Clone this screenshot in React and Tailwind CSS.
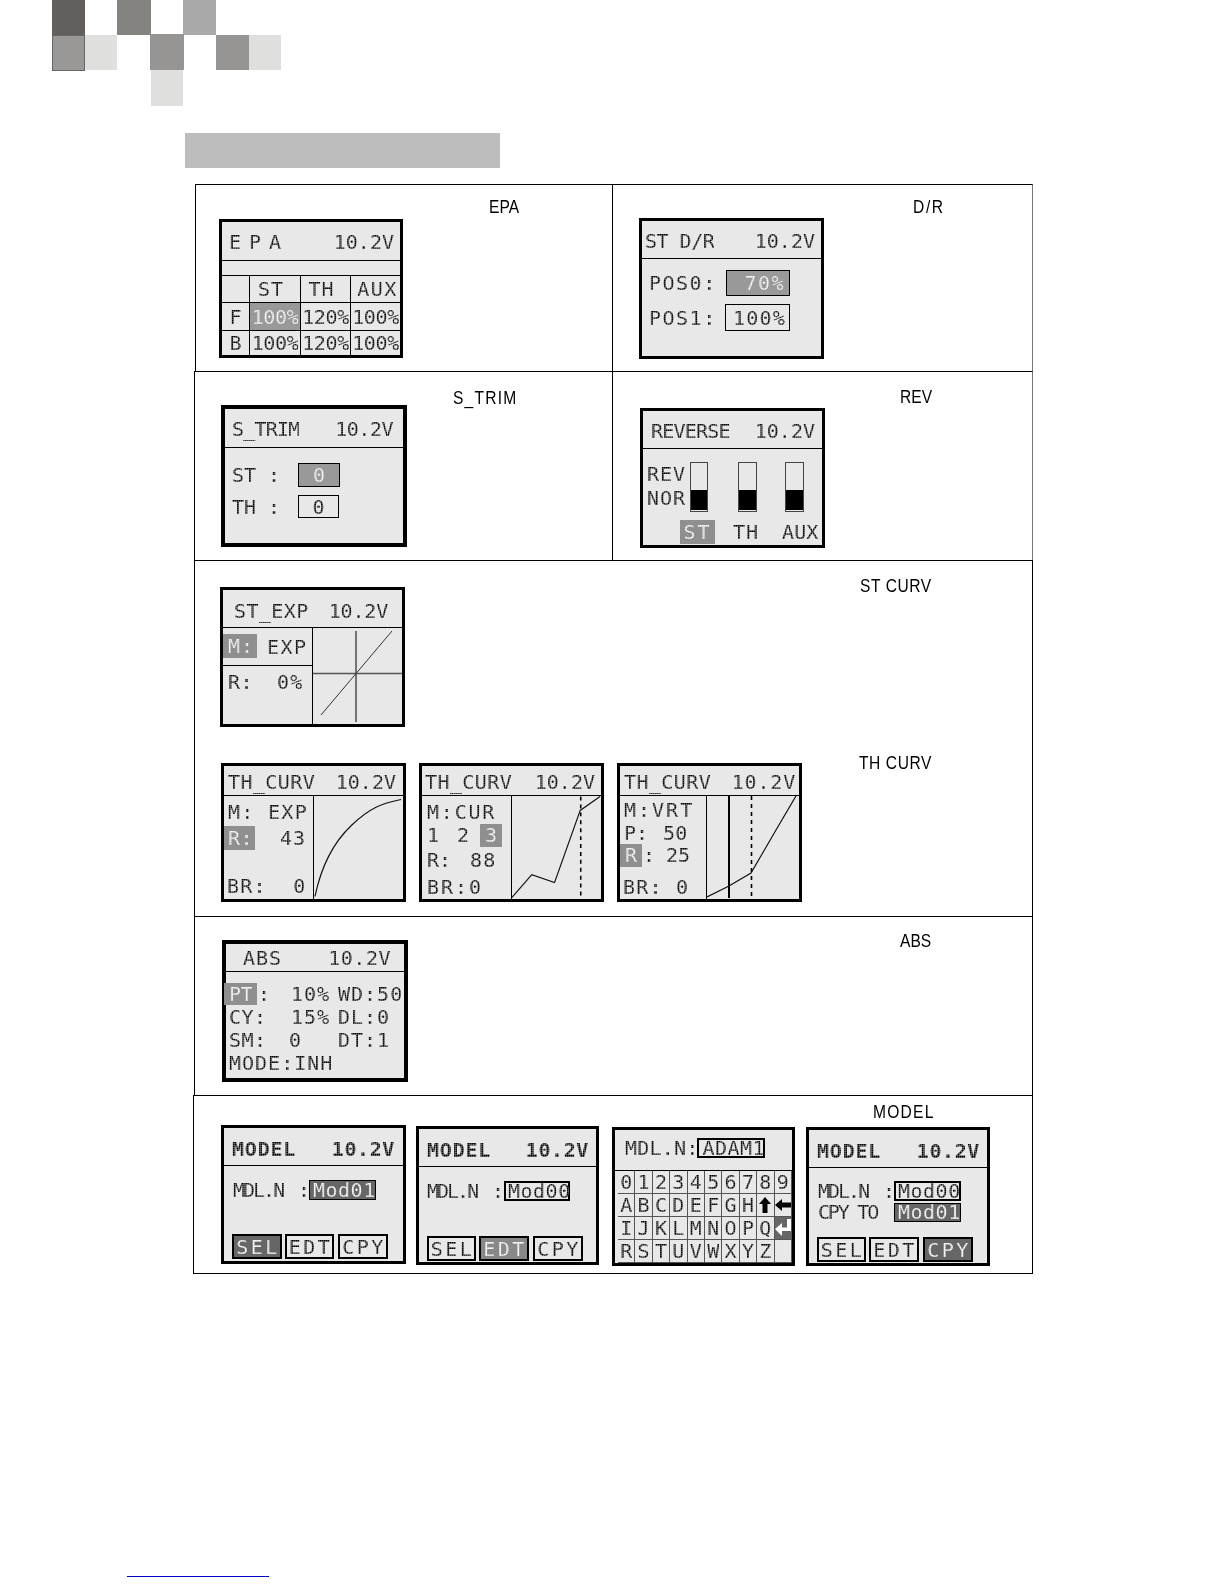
import React from 'react';
import clsx from 'clsx';

const Lcd = ({ children, light, bold, className }) => (
  <span
    className={clsx(
      "-mb-[4px] inline-block shrink-0 whitespace-pre pb-[4px] [font-family:'DejaVu_Sans_Mono',monospace] text-[20px] leading-[20px] bg-clip-text text-transparent bg-[length:2px_2px]",
      light
        ? "bg-white bg-[linear-gradient(#8f8f8f38_1px,transparent_1px),linear-gradient(90deg,#8f8f8f38_1px,transparent_1px)]"
        : "bg-black bg-[linear-gradient(#e8e8e848_1px,transparent_1px),linear-gradient(90deg,#e8e8e848_1px,transparent_1px)]",
      bold && "font-bold",
      className
    )}
  >
    {children}
  </span>
);

const Label = ({ children, className }) => (
  <span className={clsx("block shrink-0 origin-left scale-x-[.82] whitespace-pre [font-family:'Liberation_Sans',sans-serif] text-[19px] leading-[15px] text-black", className)}>
    {children}
  </span>
);

const Screen = ({ children, className }) => (
  <div className={clsx("flex shrink-0 flex-col border-[3px] border-black bg-[#e8e8e8]", className)}>{children}</div>
);

const Head = ({ title, className, titleClass, voltClass, bold }) => (
  <div className={clsx("flex shrink-0 items-center justify-between border-b border-black", className)}>
    <Lcd bold={bold} className={titleClass}>{title}</Lcd>
    <Lcd bold={bold} className={voltClass}>10.2V</Lcd>
  </div>
);

const Chip = ({ children, className, textClass }) => (
  <div className={clsx("flex shrink-0 items-center bg-[#8f8f8f]", className)}>
    <Lcd light className={textClass}>{children}</Lcd>
  </div>
);

const Box = ({ children, filled, className, textClass }) => (
  <div className={clsx("flex shrink-0 items-center border border-black", filled && "bg-[#999]", className)}>
    <Lcd light={filled} className={textClass}>{children}</Lcd>
  </div>
);

const Logo = () => (
  <svg width="230" height="106" viewBox="0 0 230 106" className="ml-[52px] block">
    <rect x="0" y="0" width="33" height="35" fill="#625f5c" />
    <rect x="65" y="0" width="34" height="35" fill="#84837f" />
    <rect x="131" y="0" width="33" height="35" fill="#a9a9a9" />
    <rect x="0.5" y="35.5" width="32" height="35" fill="#999896" stroke="#666" />
    <rect x="33" y="35" width="32" height="35" fill="#dfdfde" />
    <rect x="98" y="34" width="34" height="36" fill="#969593" />
    <rect x="164" y="35" width="33" height="35" fill="#969593" />
    <rect x="197" y="35" width="32" height="35" fill="#dfdfde" />
    <rect x="99" y="70" width="32" height="36" fill="#dfdfde" />
  </svg>
);

const EpaScreen = () => {
  const cols = "grid grid-cols-[28px_51px_50px_49px]";
  const cell = "flex items-center justify-center border-r border-black";
  const val = "tracking-[-0.4px]";
  return (
    <Screen className="mt-[34px] h-[139px] w-[184px]">
      <Head title="EPA" className="h-[39px] pl-[7px] pr-[6px] pt-[2px]" titleClass="tracking-[8px]" />
      <div className="h-[15px] shrink-0 border-b border-black" />
      <div className={clsx(cols, "h-[27px] border-b border-black")}>
        <div className={cell} />
        <div className={clsx(cell, "pr-[8px]")}><Lcd className="tracking-[1px]">ST</Lcd></div>
        <div className={clsx(cell, "pr-[8px]")}><Lcd className="tracking-[1px]">TH</Lcd></div>
        <div className="flex items-center justify-center pl-[4px]"><Lcd className="tracking-[1.4px]">AUX</Lcd></div>
      </div>
      <div className={clsx(cols, "h-[28px] border-b border-black")}>
        <div className={cell}><Lcd>F</Lcd></div>
        <div className={clsx(cell, "bg-[#999]")}><Lcd light className={val}>100%</Lcd></div>
        <div className={cell}><Lcd className={val}>120%</Lcd></div>
        <div className="flex items-center justify-center"><Lcd className={val}>100%</Lcd></div>
      </div>
      <div className={clsx(cols, "flex-1")}>
        <div className={cell}><Lcd>B</Lcd></div>
        <div className={cell}><Lcd className={val}>100%</Lcd></div>
        <div className={cell}><Lcd className={val}>120%</Lcd></div>
        <div className="flex items-center justify-center"><Lcd className={val}>100%</Lcd></div>
      </div>
    </Screen>
  );
};

const DrScreen = () => (
  <Screen className="mt-[33px] h-[141px] w-[185px]">
    <Head title="ST D/R" className="h-[38px] pl-[3px] pr-[6px] pt-[2px]" titleClass="tracking-[-0.5px]" />
    <div className="flex items-center pl-[7px] pt-[11px]">
      <Lcd className="w-[77px] tracking-[1.5px]">POS0:</Lcd>
      <Box filled className="h-[26px] w-[64px] justify-end pr-[4px]" textClass="tracking-[1.5px]">70%</Box>
    </div>
    <div className="flex items-center pl-[7px] pt-[8px]">
      <Lcd className="w-[76px] tracking-[1.5px]">POS1:</Lcd>
      <Box className="h-[27px] w-[65px] pl-[7px]" textClass="tracking-[1.2px]">100%</Box>
    </div>
  </Screen>
);

const Switch = ({ className }) => (
  <div className={clsx("flex h-[50px] shrink-0 flex-col justify-end border border-[#444] pb-[1px]", className)}>
    <div className="h-[20px] bg-black" />
  </div>
);

const RevScreen = () => (
  <Screen className="mt-[36px] h-[140px] w-[185px]">
    <Head title="REVERSE" className="h-[38px] pl-[8px] pr-[7px] pt-[2px]" titleClass="tracking-[-0.8px]" />
    <div className="flex pt-[13px]">
      <div className="flex w-[47px] shrink-0 flex-col pl-[4px] pt-[2px]">
        <Lcd className="tracking-[1px]">REV</Lcd>
        <Lcd className="mt-[4px] tracking-[1px]">NOR</Lcd>
      </div>
      <Switch className="w-[18px]" />
      <Switch className="ml-[30px] w-[19px]" />
      <Switch className="ml-[28px] w-[19px]" />
    </div>
    <div className="mt-[8px] flex items-center">
      <Chip className="ml-[37px] h-[24px] w-[35px] justify-center" textClass="tracking-[2px]">ST</Chip>
      <Lcd className="ml-[18px] tracking-[1px]">TH</Lcd>
      <Lcd className="ml-[23px]">AUX</Lcd>
    </div>
  </Screen>
);

const TrimScreen = () => (
  <Screen className="mt-[33px] h-[142px] w-[186px] border-[4px]">
    <Head title="S_TRIM" className="h-[39px] pl-[7px] pr-[10px] pt-[1px]" titleClass="tracking-[-0.8px]" voltClass="tracking-[-0.5px]" />
    <div className="flex items-center pl-[7px] pt-[15px]">
      <Lcd className="w-[66px]">ST :</Lcd>
      <Box filled className="h-[24px] w-[42px] justify-center">0</Box>
    </div>
    <div className="flex items-center pl-[7px] pt-[8px]">
      <Lcd className="w-[66px]">TH :</Lcd>
      <Box className="h-[23px] w-[41px] justify-center">0</Box>
    </div>
  </Screen>
);

const ExpScreen = () => (
  <Screen className="-ml-[1px] mt-[26px] h-[140px] w-[185px]">
    <Head title="ST_EXP" className="h-[38px] pl-[11px] pr-[14px] pt-[4px]" titleClass="tracking-[0.4px]" voltClass="tracking-[-0.2px]" />
    <div className="flex flex-1">
      <div className="flex w-[90px] shrink-0 flex-col border-r border-black">
        <div className="flex h-[38px] items-start border-b border-black pt-[6px]">
          <Chip className="h-[24px] w-[34px] pl-[5px]" textClass="tracking-[1px]">M:</Chip>
          <Lcd className="ml-[10px] mt-[3px] tracking-[1.4px]">EXP</Lcd>
        </div>
        <div className="flex items-start pl-[5px] pt-[6px]">
          <Lcd className="tracking-[0.5px]">R:</Lcd>
          <Lcd className="ml-[24px] tracking-[1px]">0%</Lcd>
        </div>
      </div>
      <svg width="89" height="96" viewBox="0 0 89 96" className="block">
        <path d="M43 3V94" stroke="#000" fill="none" />
        <path d="M0 45.5H89" stroke="#555" strokeWidth="1.5" fill="none" />
        <path d="M8 87L79 3" stroke="#333" fill="none" />
      </svg>
    </div>
  </Screen>
);

const CurvScreen = ({ voltClass, headClass, children, chart, split }) => (
  <Screen className={clsx("h-[139px] w-[185px]")}>
    <Head title="TH_CURV" className={clsx("h-[30px]", headClass)} titleClass="tracking-[0.4px]" voltClass={voltClass} />
    <div className="flex flex-1">
      <div className={clsx("flex shrink-0 flex-col border-r border-black", split)}>{children}</div>
      {chart}
    </div>
  </Screen>
);

const Curve = ({ d, children }) => (
  <svg width="90" height="103" viewBox="0 0 90 103" className="block">
    {children}
    <path d={d} stroke="#111" strokeWidth="1.2" fill="none" />
  </svg>
);

const ThRow = () => (
  <div className="flex items-start">
    <CurvScreen
      headClass="pl-[4px] pr-[7px] pt-[3px]"
      split="w-[90px]"
      chart={<Curve d="M1 101C7 72 20 46 38 29S68 7 88 3" />}
    >
      <Lcd className="ml-[4px] mt-[6px] tracking-[1.3px]">M: EXP</Lcd>
      <div className="mt-[4px] flex h-[24px] items-center">
        <Chip className="h-[24px] w-[31px] pl-[4px]" textClass="tracking-[0.4px]">R:</Chip>
        <Lcd className="ml-[25px] tracking-[1px]">43</Lcd>
      </div>
      <Lcd className="ml-[3px] mt-[26px] tracking-[1.2px]">BR:  0</Lcd>
    </CurvScreen>
    <div className="ml-[13px]">
      <CurvScreen
        headClass="pl-[3px] pr-[6px] pt-[3px]"
        split="w-[90px]"
        chart={
          <Curve d="M0 102L20 79L43 87L69 14L89 0">
            <path d="M69.5 0V102" stroke="#000" strokeWidth="1.6" strokeDasharray="4 4" fill="none" />
          </Curve>
        }
      >
        <Lcd className="ml-[5px] mt-[6px] tracking-[1.8px]">M:CUR</Lcd>
        <div className="mt-[1px] flex h-[24px] items-center pl-[5px]">
          <Lcd className="tracking-[3px]">1 2</Lcd>
          <Chip className="ml-[8px] h-[23px] w-[22px] justify-center">3</Chip>
        </div>
        <div className="mt-[3px] flex items-center pl-[5px]">
          <Lcd>R:</Lcd>
          <Lcd className="ml-[19px] tracking-[1px]">88</Lcd>
        </div>
        <Lcd className="ml-[5px] mt-[7px] tracking-[2px]">BR:0</Lcd>
      </CurvScreen>
    </div>
    <div className="ml-[13px]">
      <CurvScreen
        headClass="pl-[4px] pr-[3px] pt-[3px]"
        voltClass="tracking-[0.8px]"
        split="w-[87px]"
        chart={
          <Curve d="M0 101L22 90L44 77L69 34L89 0">
            <path d="M22 0V102" stroke="#000" strokeWidth="2" fill="none" />
            <path d="M44.5 0V102" stroke="#000" strokeWidth="1.6" strokeDasharray="4 4" fill="none" />
          </Curve>
        }
      >
        <Lcd className="ml-[4px] mt-[4px] tracking-[2px]">M:VRT</Lcd>
        <div className="mt-[3px] flex items-center pl-[4px]">
          <Lcd>P:</Lcd>
          <Lcd className="ml-[15px]">50</Lcd>
        </div>
        <div className="flex h-[24px] items-center">
          <Chip className="h-[23px] w-[22px] justify-center">R</Chip>
          <Lcd className="ml-[1px]">:</Lcd>
          <Lcd className="ml-[11px]">25</Lcd>
        </div>
        <Lcd className="ml-[3px] mt-[10px] tracking-[1.2px]">BR: 0</Lcd>
      </CurvScreen>
    </div>
  </div>
);

const AbsScreen = () => {
  const row = "grid h-[23.4px] grid-cols-[65px_47px_1fr] items-center";
  const trk = "tracking-[1px]";
  return (
    <Screen className="mt-[23px] h-[142px] w-[186px] border-[4px]">
      <Head title="ABS" className="h-[28px] pl-[17px] pr-[13px]" titleClass="tracking-[1px]" voltClass="tracking-[0.5px]" />
      <div className="pt-[10px]">
        <div className={row}>
          <div className="flex items-center">
            <Chip className="-ml-[2px] h-[22px] w-[33px] pl-[5px]" textClass="tracking-[-0.4px]">PT</Chip>
            <Lcd className="ml-[1px]">:</Lcd>
          </div>
          <Lcd className={trk}>10%</Lcd>
          <Lcd className={trk}>WD:50</Lcd>
        </div>
        <div className={row}>
          <Lcd className="ml-[3px] tracking-[0.5px]">CY:</Lcd>
          <Lcd className={trk}>15%</Lcd>
          <Lcd className={trk}>DL:0</Lcd>
        </div>
        <div className={row}>
          <Lcd className="ml-[3px] tracking-[0.5px]">SM:</Lcd>
          <Lcd className="-ml-[2px]">0</Lcd>
          <Lcd className={trk}>DT:1</Lcd>
        </div>
        <Lcd className="ml-[3px] tracking-[1px]">MODE:INH</Lcd>
      </div>
    </Screen>
  );
};

const Btn = ({ children, on, dark, className }) => (
  <div className={clsx("flex h-[25px] items-center justify-center border-[2px] border-black", on && (dark ? "bg-[#666]" : "bg-[#888]"), className)}>
    <Lcd light={on} className="pl-[2px] tracking-[2.4px]">{children}</Lcd>
  </div>
);

const ModelHead = ({ className }) => (
  <Head title="MODEL" bold className={className} titleClass="tracking-[0.8px]" voltClass="tracking-[0.6px]" />
);

const ModA = () => (
  <Screen className="mt-[4px] h-[139px] w-[185px]">
    <ModelHead className="h-[38px] pl-[8px] pr-[8px] pt-[5px]" />
    <div className="flex items-center pl-[9px] pt-[14px]">
      <Lcd className="w-[65px] tracking-[-2px]">MDL.N</Lcd>
      <Lcd className="w-[11px]">:</Lcd>
      <div className="flex h-[20px] w-[67px] items-center border border-black bg-[#666] pl-[3px]">
        <Lcd light className="tracking-[0.5px]">Mod01</Lcd>
      </div>
    </div>
    <div className="mb-[2px] mt-auto flex pl-[8px]">
      <Btn on dark className="w-[50px]">SEL</Btn>
      <Btn className="ml-[3px] w-[49px]">EDT</Btn>
      <Btn className="ml-[4px] w-[50px]">CPY</Btn>
    </div>
  </Screen>
);

const ModB = () => (
  <Screen className="ml-[10px] mt-[5px] h-[139px] w-[183px]">
    <ModelHead className="h-[38px] pl-[8px] pr-[7px] pt-[5px]" />
    <div className="flex items-center pl-[8px] pt-[14px]">
      <Lcd className="w-[65px] tracking-[-2px]">MDL.N</Lcd>
      <Lcd className="w-[12px]">:</Lcd>
      <div className="flex h-[20px] w-[66px] items-center border-[2px] border-black pl-[2px]">
        <Lcd className="tracking-[0.5px]">Mod00</Lcd>
      </div>
    </div>
    <div className="mb-[1px] mt-auto flex pl-[8px]">
      <Btn className="w-[49px]">SEL</Btn>
      <Btn on className="ml-[3px] w-[50px]">EDT</Btn>
      <Btn className="ml-[4px] w-[50px]">CPY</Btn>
    </div>
  </Screen>
);

const Up = () => (
  <svg width="12" height="16" viewBox="0 0 12 16"><path d="M6 0L12 7H8.5V16H3.5V7H0Z" fill="#000" /></svg>
);
const Left = () => (
  <svg width="16" height="12" viewBox="0 0 16 12"><path d="M0 6L7 0V3.5H16V8.5H7V12Z" fill="#000" /></svg>
);
const Enter = () => (
  <svg width="16" height="18" viewBox="0 0 16 18"><path d="M12 0H16V12H7V17L0 10L7 4V8.5H12Z" fill="#fff" /></svg>
);

const KEYS = [
  ['0','1','2','3','4','5','6','7','8','9'],
  ['A','B','C','D','E','F','G','H','up','left'],
  ['I','J','K','L','M','N','O','P','Q','enter'],
  ['R','S','T','U','V','W','X','Y','Z',''],
];

const ModC = () => (
  <Screen className="ml-[13px] mt-[6px] h-[139px] w-[183px]">
    <div className="flex h-[41px] shrink-0 items-center border-b border-black pb-[4px] pl-[10px]">
      <Lcd className="tracking-[0.2px]">MDL.N:</Lcd>
      <div className="ml-[-1px] flex h-[20px] w-[68px] items-center border-[2px] border-black pl-[3px]">
        <Lcd className="tracking-[0.5px]">ADAM1</Lcd>
      </div>
    </div>
    <div className="grid flex-1 grid-cols-10 grid-rows-4 pl-[3px]">
      {KEYS.flat().map((k, i) => (
        <div key={i} className={clsx("flex items-center justify-center overflow-hidden border-b border-r border-[#555]", k === 'enter' && "bg-[#666]")}>
          {k === 'up' ? <Up /> : k === 'left' ? <Left /> : k === 'enter' ? <Enter /> : <Lcd>{k}</Lcd>}
        </div>
      ))}
    </div>
  </Screen>
);

const ModD = () => (
  <Screen className="ml-[11px] mt-[6px] h-[139px] w-[184px]">
    <ModelHead className="h-[38px] pl-[8px] pr-[7px] pt-[4px]" />
    <div className="flex items-center pl-[9px] pt-[13px]">
      <Lcd className="w-[65px] tracking-[-2px]">MDL.N</Lcd>
      <Lcd className="w-[11px]">:</Lcd>
      <div className="flex h-[20px] w-[67px] items-center border-[2px] border-black pl-[2px]">
        <Lcd className="tracking-[0.5px]">Mod00</Lcd>
      </div>
    </div>
    <div className="flex items-center pl-[9px] pt-[1px]">
      <Lcd className="w-[76px] tracking-[-2.2px]">CPY TO</Lcd>
      <div className="flex h-[19px] w-[67px] items-center border border-black bg-[#666] pl-[3px]">
        <Lcd light className="tracking-[0.5px]">Mod01</Lcd>
      </div>
    </div>
    <div className="mb-[1px] mt-auto flex pl-[8px]">
      <Btn className="w-[49px]">SEL</Btn>
      <Btn className="ml-[3px] w-[50px]">EDT</Btn>
      <Btn on dark className="ml-[4px] w-[50px]">CPY</Btn>
    </div>
  </Screen>
);

export default function App() {
  return (
    <div className="h-[1585px] w-[1225px] overflow-hidden bg-white">
      <Logo />
      <div className="ml-[185px] mt-[27px] h-[35px] w-[315px] bg-[#bdbdbd]" />

      <div className="ml-[194px] mt-[16px] w-[839px]">
        {/* EPA / D/R */}
        <div className="ml-[1px] flex h-[187px] border-l border-t border-r border-black border-r-[#777]">
          <div className="flex w-[417px] shrink-0 items-start border-r border-black pl-[23px]">
            <EpaScreen />
            <Label className="ml-[86px] mt-[14px]">EPA</Label>
          </div>
          <div className="flex flex-1 items-start pl-[26px]">
            <DrScreen />
            <Label className="ml-[89px] mt-[14px] tracking-[2px]">D/R</Label>
          </div>
        </div>

        {/* S_TRIM / REV */}
        <div className="flex h-[189px] border-l border-t border-r border-black border-r-[#777]">
          <div className="flex w-[418px] shrink-0 items-start border-r border-black pl-[26px]">
            <TrimScreen />
            <Label className="ml-[46px] mt-[18px] tracking-[1.5px]">S_TRIM</Label>
          </div>
          <div className="flex flex-1 items-start pl-[27px]">
            <RevScreen />
            <Label className="ml-[75px] mt-[17px]">REV</Label>
          </div>
        </div>

        {/* curves */}
        <div className="flex h-[356px] flex-col border-l border-t border-r border-black pl-[26px]">
          <div className="flex items-start">
            <ExpScreen />
            <Label className="ml-[455px] mt-[17px] tracking-[0.7px]">ST CURV</Label>
          </div>
          <div className="mt-[36px] flex items-start">
            <ThRow />
            <Label className="ml-[57px] -mt-[8px] tracking-[0.7px]">TH CURV</Label>
          </div>
        </div>

        {/* ABS */}
        <div className="flex h-[179px] items-start border-l border-t border-r border-black pl-[27px]">
          <AbsScreen />
          <Label className="ml-[492px] mt-[16px]">ABS</Label>
        </div>

        {/* MODEL */}
        <div className="-ml-[1px] flex h-[179px] flex-col border border-black pl-[27px]">
          <Label className="ml-[652px] mt-[8px] mb-[2px] tracking-[1.5px]">MODEL</Label>
          <div className="flex items-start">
            <ModA />
            <ModB />
            <ModC />
            <ModD />
          </div>
        </div>
      </div>

      <div className="ml-[127px] mt-[302px] h-[1px] w-[142px] bg-[#0000cc]" />
    </div>
  );
}
